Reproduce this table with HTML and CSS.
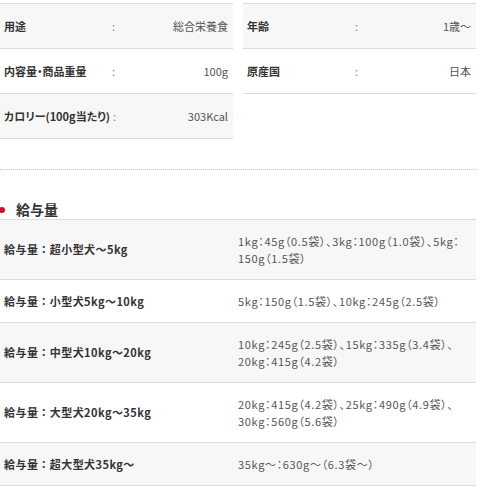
FILE: index.html
```html
<!DOCTYPE html>
<html lang="ja">
<head>
<meta charset="utf-8">
<link rel="stylesheet" href="styles.css">
</head>
<body>
<div class="page">
  <div class="spec">
    <div class="spec-table">
      <div class="spec-row gray"><span class="k">用途</span><span class="c">:</span><span class="v">総合栄養食</span></div>
      <div class="spec-row"><span class="k">内容量・商品重量</span><span class="c">:</span><span class="v">100g</span></div>
      <div class="spec-row gray"><span class="k">カロリー(100g当たり)</span><span class="c">:</span><span class="v">303Kcal</span></div>
    </div>
    <div class="spec-table">
      <div class="spec-row gray"><span class="k">年齢</span><span class="c">:</span><span class="v">1歳～</span></div>
      <div class="spec-row"><span class="k">原産国</span><span class="c">:</span><span class="v">日本</span></div>
    </div>
  </div>
  <div class="dots"></div>
  <h2 class="heading"><span class="dot"></span>給与量</h2>
  <div class="feed">
    <div class="feed-row gray"><div class="fk">給与量：超小型犬～5kg</div><div class="fv">1kg：45g（0.5袋）、3kg：100g（1.0袋）、5kg：150g（1.5袋）</div></div>
    <div class="feed-row"><div class="fk">給与量：小型犬5kg～10kg</div><div class="fv">5kg：150g（1.5袋）、10kg：245g（2.5袋）</div></div>
    <div class="feed-row gray"><div class="fk">給与量：中型犬10kg～20kg</div><div class="fv">10kg：245g（2.5袋）、15kg：335g（3.4袋）、20kg：415g（4.2袋）</div></div>
    <div class="feed-row"><div class="fk">給与量：大型犬20kg～35kg</div><div class="fv">20kg：415g（4.2袋）、25kg：490g（4.9袋）、30kg：560g（5.6袋）</div></div>
    <div class="feed-row gray"><div class="fk">給与量：超大型犬35kg～</div><div class="fv">35kg～：630g～（6.3袋～）</div></div>
  </div>
</div>
</body>
</html>
```
FILE: styles.css
```css
* { box-sizing: border-box; }
html, body { margin: 0; padding: 0; background: #fff; }
body {
  font-family: "Noto Sans CJK JP", "Noto Sans", sans-serif;
  color: #333;
  font-size: 11px;
}
.page { width: 476px; padding-top: 3px; }
.spec { display: flex; gap: 10px; align-items: flex-start; }
.spec-table { width: 233px; border-top: 1px solid #dcdcdc; }
.spec-row {
  display: flex;
  align-items: center;
  height: 45px;
  padding: 0 5px 0 4px;
  border-bottom: 1px solid #dcdcdc;
  line-height: 16px;
}
.gray { background: #f7f7f7; }
.k {
  min-width: 108px;
  padding-right: 3px;
  font-weight: bold;
  color: #333;
  font-feature-settings: "palt";
}
.c { color: #888; }
.v { margin-left: auto; color: #555; }
.dots { margin-top: 30px; border-top: 1px dotted #c8c8c8; }
.heading {
  margin: 29px 0 0 0;
  display: flex;
  align-items: center;
  font-size: 14px;
  line-height: 20px;
  height: 20px;
  font-weight: bold;
  color: #333;
}
.dot {
  width: 6px; height: 6px; border-radius: 50%;
  background: #c4122f;
  margin: 1px 11px 0 -1px;
}
.feed { border-top: 1px solid #dcdcdc; }
.feed-row {
  display: flex;
  align-items: center;
  border-bottom: 1px solid #dcdcdc;
  padding: 12.5px 0;
  line-height: 17px;
}
.fk {
  width: 234px;
  padding-left: 4px;
  font-weight: bold;
  letter-spacing: 0.04em;
  color: #333;
}
.fv {
  width: 242px;
  padding: 0 6px 0 4px;
  color: #555;
  letter-spacing: 0.06em;
  font-feature-settings: "palt";
}
```
